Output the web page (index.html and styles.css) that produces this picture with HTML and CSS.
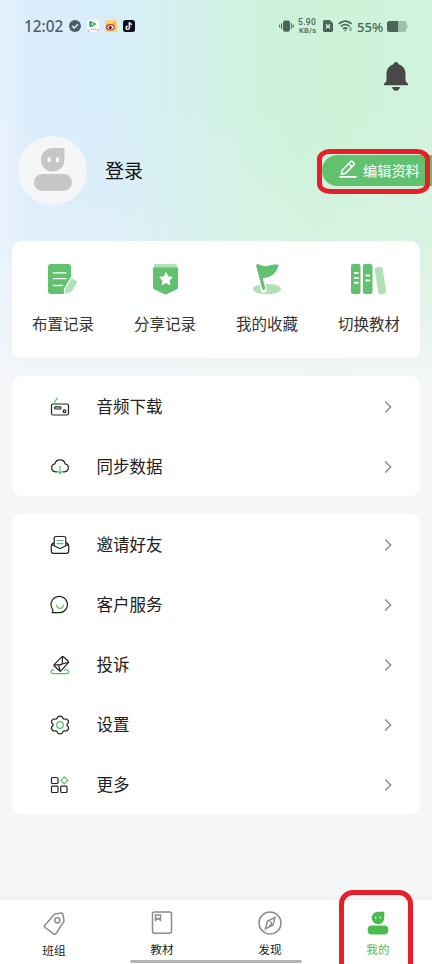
FILE: index.html
```html
<!DOCTYPE html>
<html lang="zh-CN">
<head>
<meta charset="utf-8">
<meta name="viewport" content="width=device-width, initial-scale=1">
<title>我的</title>
<link rel="stylesheet" href="styles.css">
</head>
<body>
<div class="screen">
  <header class="status">
    <span class="time">12:02</span>
    <svg class="app" viewBox="0 0 12 12"><circle cx="6" cy="6" r="6" fill="#4e5f69"/><path d="M3.2 6l2 2 3.7-3.800" fill="none" stroke="#e8f5fb" stroke-width="1.300"/></svg>
    <svg class="app" viewBox="0 0 12 12"><rect width="12" height="12" rx="2.500" fill="#fff"/><path d="M2.200 1.300Q2.500.8 3.300 1l2.900 1.100L5 6.200 3 7.100Q1.700 5 2.200 1.300z" fill="#1695e8"/><path d="M4 1.400L9 3.400Q9.800 4 9 4.600L4.200 7.200Q3.300 7.400 3 6.800z" fill="#41b842"/><path d="M4.700 3l2 1.100-2 1.100z" fill="#fff"/><path d="M1 9.500v1.300l1.500.7M4 9.400h1.500M6.500 9v1M8 9.400h1.500M11 9v1.600l-1 .8" stroke="#777" stroke-width=".7" fill="none"/></svg>
    <svg class="app" viewBox="0 0 12 12"><rect width="12" height="12" rx="2.500" fill="#fdd475"/><ellipse cx="5.400" cy="7.200" rx="4.400" ry="3.200" fill="#d82b27"/><ellipse cx="5.600" cy="7.300" rx="3" ry="2.100" fill="#fff"/><circle cx="5.300" cy="7.400" r="1.500" fill="#222"/><path d="M7.600 2.100q2.800-.2 2.800 2.900M7.900 3.600q1.100 0 1.100 1.200" fill="none" stroke="#f29332" stroke-width=".8"/></svg>
    <svg class="app" viewBox="0 0 12 12"><rect width="12" height="12" rx="2.500" fill="#07101c"/><path d="M6.300 2v5.800a1.600 1.600 0 1 1-1.600-1.600M6.300 2.200q.4 2 2.800 2.200" fill="none" stroke="#fff" stroke-width="1.400"/><path d="M7.300 5v3q-.3 2-2.300 2" fill="none" stroke="#ee3b62" stroke-width=".5"/></svg>
    <svg class="vibrate" viewBox="0 0 16 12"><rect x="4.300" y="0" width="7.400" height="12" rx="2" fill="#4b6558"/><path d="M2.800 3v6.200M.7 4.500v3M13.200 3v6.200M15.300 4.500v3" stroke="#4b6558" stroke-width="1.100"/></svg>
    <span class="speed"><span>5.90</span><span>KB/s</span></span>
    <svg class="sim" viewBox="0 0 10 12"><path d="M1.500 0H6.500L10 3v7.500q0 1.500-1.500 1.500h-7Q0 12 0 10.500v-9Q0 0 1.500 0z" fill="#4b6558"/><path d="M3 4.500l4 3.800M7 4.500L3 8.300" stroke="#e0f5e8" stroke-width="1.400"/></svg>
    <svg class="wifi" viewBox="0 0 15 12"><path d="M.7 3.900q6.500-5.600 13 0M2.800 6.500q4.400-4 8.800 0M5 8.900q2.200-2 4.400 0" fill="none" stroke="#4b6558" stroke-width="1.600"/><path d="M5.800 9.800h2.800l-1.400 1.700zM11.300 8.500l1.300-1.500 1.300 1.500zM11.300 9.600h2.600l-1.300 1.600z" fill="#4b6558"/></svg>
    <span class="percent">55%</span>
    <svg class="battery" viewBox="0 0 21 11"><rect width="19.500" height="11" rx="2.500" fill="#9ebfad"/><path d="M2.500 0H11v11H2.500Q0 11 0 8.500v-6Q0 0 2.500 0z" fill="#4b6558"/><path d="M19.500 3.500q1.500.3 1.500 2t-1.500 2z" fill="#9ebfad"/></svg>
  </header>

  <div class="notice">
    <svg class="bell" viewBox="0 0 24 29"><path d="M12 0q2.200 0 2.500 2.300Q21 4.500 21.500 11v7q0 2 2 3.200.5.300.5 1.300v.8H0v-.8q0-1 .5-1.300 2-1.200 2-3.200v-7Q3 4.500 9.500 2.300 9.800 0 12 0z" fill="#484848"/><path d="M8 25.100h8q-.8 3.500-4 3.700-3.200-.2-4-3.700z" fill="#484848"/></svg>
  </div>

  <section class="profile">
    <div class="avatar"><svg viewBox="0 0 38 43"><path d="M19 0h11.500v12A11.800 11.800 0 1 1 19 0z" fill="#c7c7c7"/><rect x="13.600" y="9.500" width="3" height="4.800" rx="1" fill="#fff"/><rect x="22" y="9.500" width="3" height="4.800" rx="1" fill="#fff"/><rect y="26" width="38" height="17" rx="8.200" fill="#c7c7c7"/></svg></div>
    <h1 class="name">登录</h1>
    <div class="edit">
      <svg viewBox="0 0 18 18"><path d="M3.200 10.300L11.500 1.700q1-.9 2 0l1.300 1.300q.9.900 0 1.900L6.400 13.400l-4.100.9zM9.800 3.700l3 3M1 16.900h16" fill="none" stroke="#fff" stroke-width="1.600" stroke-linejoin="round" stroke-linecap="round"/></svg>
      <span>编辑资料</span>
      <i class="mark mark-edit"></i>
    </div>
  </section>

  <section class="card shortcuts">
    <div class="shortcut"><svg viewBox="0 0 32 32"><rect x="1" y="1" width="23" height="30" rx="3" fill="#62c16f"/><path d="M6.500 9.800h12.500M6.500 15.600h12.500M6.500 22.500h9" stroke="#fff" stroke-width="1.300" stroke-linecap="round"/><path d="M25 14.800l5.500 3q1 .6.400 1.600l-6 9.700-5.500 2.500q-2-.3-1.900-5.500l6.200-10.600q.5-.9 1.300-.7z" fill="#afe0b6" stroke="#fff" stroke-width="1.300"/></svg><span>布置记录</span></div>
    <div class="shortcut"><svg class="shifted" viewBox="0 0 32 32"><path d="M5.500 1h20q1.800 0 1.800 2v3H4V3q0-2 1.500-2z" fill="#afe0b6"/><path d="M3 5.500q0-1 1-1h23q1 0 1 1v19q0 1.200-1 1.800l-10.500 5q-1 .5-2 0L4 26.300q-1-.6-1-1.800z" fill="#62c16f"/><path d="M16 9.700l1.800 4.100 4.500.5-3.300 3 .9 4.400-3.900-2.200-3.900 2.200.9-4.400-3.300-3 4.500-.5z" fill="#fff" stroke="#fff" stroke-linejoin="round"/></svg><span>分享记录</span></div>
    <div class="shortcut"><svg class="shifted" viewBox="0 0 32 32"><ellipse cx="15" cy="26" rx="14" ry="5.300" fill="#afe0b6"/><path d="M6.500 4l5.200 23" stroke="#fff" stroke-width="5.800" stroke-linecap="round"/><path d="M4.200 3q-.4-1.900 2-1.900 5.500 3.300 11 1.400 4-1.500 8.500-1 1.400.2.800 1.800Q23 14.500 10.800 15.200l2.300 9.900q.2 1.500-1.200 1.800-1.300.2-1.700-1.200z" fill="#62c16f"/></svg><span>我的收藏</span></div>
    <div class="shortcut"><svg class="books" viewBox="0 0 36 32"><rect x="0" y="1" width="9.500" height="30" rx="2" fill="#62c16f"/><rect x="12" y="1" width="9.500" height="30" rx="2" fill="#62c16f"/><path d="M3.800 10h3M3.800 14.900h3M3.800 19.800h3M15.200 12.500h3M15.200 17.500h3" stroke="#fff" stroke-width="2" stroke-linecap="round"/><rect x="25.500" y="4" width="8" height="27" rx="2" transform="rotate(-9 29.500 17.500)" fill="#afe0b6"/></svg><span>切换教材</span></div>
  </section>

  <section class="card list">
    <div class="row"><svg class="ico" viewBox="0 0 20 20"><rect x="1.500" y="7" width="17" height="11" rx="1.500"/><rect x="4.500" y="9.800" width="6.500" height="2.200" rx="1"/><circle cx="14.500" cy="14.300" r="1.400"/><path class="g" d="M4.300 5.500L7.200 1.200"/></svg><span>音频下载</span><svg class="chev" viewBox="0 0 8 14"><path d="M1.200 1.500L6.700 7l-5.500 5.500"/></svg></div>
    <div class="row"><svg class="ico" viewBox="0 0 20 20"><path d="M7 14.800H5.500A4 4 0 0 1 4.800 6.900a5.400 5.400 0 0 1 10.400 0A4 4 0 0 1 14.500 14.800H13"/><path class="g" d="M10 9v7.500M8 14.300l2 2.300 2-2.300"/></svg><span>同步数据</span><svg class="chev" viewBox="0 0 8 14"><path d="M1.200 1.500L6.700 7l-5.500 5.500"/></svg></div>
  </section>

  <section class="card list">
    <div class="row"><svg class="ico" viewBox="0 0 20 20"><path d="M4 7.500L2 9q-.7.600-.7 1.500V16q0 2.300 2.200 2.300h13q2.200 0 2.200-2.300v-5.500q0-.9-.7-1.500l-2-1.500M1.500 9.500L8.700 13q1.300.6 2.600 0l7.200-3.500M4.200 10.200V3.300q0-1.800 1.800-1.800h8q1.800 0 1.800 1.800v6.900"/><path class="g" d="M7 5.500h6M7 8.700h6"/></svg><span>邀请好友</span><svg class="chev" viewBox="0 0 8 14"><path d="M1.200 1.500L6.700 7l-5.500 5.500"/></svg></div>
    <div class="row"><svg class="ico" viewBox="0 0 20 20"><path d="M10 17.700H2.200Q3.200 16.300 2.700 14.500A8.200 8.200 0 1 1 10 17.700z"/><path class="g" d="M6.500 10.300q.8 3 3.500 3t3.500-3"/></svg><span>客户服务</span><svg class="chev" viewBox="0 0 8 14"><path d="M1.200 1.500L6.700 7l-5.500 5.500"/></svg></div>
    <div class="row"><svg class="ico" viewBox="0 0 20 20"><path d="M12 1.700q.7-.6 1.400 0l5 4.600q.6.600 0 1.300L11 15.800q-.7.700-1.400 0L4.200 11q-.6-.7 0-1.300zM12.600 1.500l-.5 7.300q-.1 1-1 .7L4 10.200M11.800 9l6.800-1.700M8.700 10.300l1.400 5.700"/><path class="g" d="M4 14.800H3q-1.800 0-1.800 1.900T3 18.600h14q1.800 0 1.800-1.900T17 14.800h-2.500"/></svg><span>投诉</span><svg class="chev" viewBox="0 0 8 14"><path d="M1.200 1.500L6.700 7l-5.500 5.500"/></svg></div>
    <div class="row"><svg class="ico" viewBox="0 0 20 20"><path d="M7 3.500C7.600.3 12.400.3 13 3.500c.3.600.8.900 1.500.7 3-1.300 5.400 2.700 2.900 4.800-.6.600-.6 1.400 0 2 2.500 2.100.1 6.100-2.900 4.800-.7-.2-1.200.1-1.500.7-.6 3.200-5.400 3.200-6 0-.3-.6-.8-.9-1.500-.7-3 1.300-5.400-2.700-2.900-4.800.6-.6.600-1.400 0-2C.1 6.900 2.500 2.900 5.500 4.200c.7.200 1.200-.1 1.500-.7z"/><circle class="g" cx="10" cy="10" r="3.300"/></svg><span>设置</span><svg class="chev" viewBox="0 0 8 14"><path d="M1.200 1.500L6.700 7l-5.500 5.500"/></svg></div>
    <div class="row"><svg class="ico" viewBox="0 0 20 20"><rect x="1.500" y="2.500" width="6.500" height="6" rx="1"/><rect x="1.500" y="11.200" width="6.500" height="6.300" rx="1"/><rect x="10.700" y="11.200" width="6.300" height="6.300" rx="1"/><path class="g" d="M14.300 1.800l3.500 3.500-3.500 3.500-3.500-3.500z"/></svg><span>更多</span><svg class="chev" viewBox="0 0 8 14"><path d="M1.200 1.500L6.700 7l-5.500 5.500"/></svg></div>
  </section>

  <nav class="tabs">
    <div class="tab"><svg viewBox="0 0 24 24"><g transform="translate(0 1)"><path d="M12 2.700q.4-.6 1.200-.8l6-.8q1.500-.1 1.800 1.300l.9 6q.1.800-.3 1.500L14 21.500q-1.100 1.400-2.500.3l-8.300-6.300q-1.300-1-.3-2.300z"/><circle cx="15.300" cy="8.300" r="2.600"/></g></svg><span>班组</span></div>
    <div class="tab"><svg viewBox="0 0 24 24"><rect x="2.500" y="1" width="19" height="21.300" rx="2"/><path d="M5.500 4h5v5.200L8 7.300 5.500 9.200z"/></svg><span>教材</span></div>
    <div class="tab"><svg viewBox="0 0 24 24"><circle cx="12" cy="12" r="11"/><path d="M17 6.500l-2 7.500-7.500 3.800 2-7.800z"/><path d="M11 14.500q3 .2 2.500-2.400-.5-1.600-2-1"/></svg><span>发现</span></div>
    <div class="tab active"><svg viewBox="0 0 24 24"><path d="M12 .7h5.800q.5 0 .5.500v5.700A6.300 6.300 0 1 1 12 .7z"/><rect x="1.700" y="14.600" width="20.600" height="9" rx="4"/><path d="M9.700 5.800v1.800M14.200 5.800v1.800" stroke="#fff" stroke-width="1.400"/></svg><span>我的</span><i class="mark mark-tab"></i></div>
    <i class="home"></i>
  </nav>
</div>
</body>
</html>
```
FILE: styles.css
```css
* { box-sizing: border-box; }
body {
  margin: 0;
  font-family: "Noto Sans", "Noto Sans CJK SC", sans-serif;
  color: #202020;
}
svg { display: block; flex: none; }
.screen {
  width: 432px;
  height: 964px;
  overflow: hidden;
  display: flex;
  flex-direction: column;
  background:
    linear-gradient(180deg, rgba(245,246,248,0) 100px, rgba(245,246,248,.22) 240px, rgba(245,246,248,.5) 305px, #f5f6f8 385px),
    linear-gradient(90deg, #e9f2fc 0, #daedfc 30px, #d8edfa 110px, #d4f0ee 180px, #d1f2e3 235px, #ccf2da 300px, #ccf3d8 340px, #d2f3dd 432px);
}
.status {
  height: 52px;
  padding: 0 24px;
  display: flex;
  align-items: center;
  color: #4b6558;
}
.time { width: 45px; font-size: 15.300px; font-weight: 500; color: #4e5f69; }
.app { width: 12px; height: 12px; margin-right: 6px; }
.vibrate { width: 15px; height: 12px; margin: 0 4px 0 138px; }
.speed {
  width: 25px;
  display: flex;
  flex-direction: column;
  gap: 1px;
  font-family: Roboto, sans-serif;
  font-size: 7.500px;
  font-weight: 500;
  line-height: 7px;
  letter-spacing: .3px;
}
.speed span { height: 7px; }
.speed span:first-child { font-size: 8.500px; }
.speed span:last-child { padding-left: 1px; }
.sim { width: 10px; height: 12px; margin-right: 5px; }
.wifi { width: 15px; height: 12px; }
.percent { width: 30px; margin-left: 4px; padding-top: 1px; font-size: 13.200px; font-weight: 500; }
.battery { width: 21px; height: 11px; }
.notice { height: 84px; padding: 10px 24px 0; display: flex; justify-content: flex-end; }
.bell { width: 24px; height: 29px; }
.profile { height: 69px; padding-left: 18px; display: flex; align-items: center; }
.avatar {
  width: 69px;
  height: 69px;
  border-radius: 50%;
  background: #f5f6f8;
  display: flex;
  align-items: center;
  justify-content: center;
}
.avatar svg { width: 38px; height: 43px; margin-top: -3px; }
.name { margin: 0 auto 0 18px; font-size: 19px; line-height: 28px; font-weight: 400; color: #111; }
.edit {
  position: relative;
  width: 110px;
  height: 31px;
  padding-left: 17px;
  display: flex;
  align-items: center;
  gap: 6px;
  border-radius: 16px 0 0 16px;
  background: #62c16f;
  color: #fff;
  font-size: 14.200px;
  line-height: 20px;
}
.edit svg { width: 18px; height: 18px; margin-top: -3px; }
.mark { position: absolute; border: 5px solid #e71f28; }
.mark-edit { left: -5px; top: -6px; width: 113px; height: 45px; border-radius: 13px / 10px; }
.card { margin: 0 12px 18px; border-radius: 10px; background: #fff; }
.shortcuts { height: 117.500px; margin-top: 35.500px; display: grid; grid-template-columns: repeat(4, 1fr); }
.shortcut {
  padding-top: 22px;
  display: flex;
  flex-direction: column;
  align-items: center;
  gap: 17.500px;
  font-size: 15.500px;
  line-height: 24px;
  color: #333;
}
.shortcut svg { width: 32px; height: 32px; }
.shortcut .shifted { margin-left: 2px; }
.shortcut .books { width: 36px; }
.row {
  height: 60px;
  padding: 1px 28px 0 38px;
  display: flex;
  align-items: center;
  font-size: 16.500px;
  line-height: 24px;
}
.row span { margin: 0 auto 0 26.500px; }
.ico { width: 20px; height: 20px; fill: none; stroke: #222; stroke-width: 1.200; stroke-linejoin: round; stroke-linecap: round; }
.ico .g { stroke: #58bb68; }
.chev { width: 8px; height: 14px; fill: none; stroke: #858585; stroke-width: 1.300; }
.tabs {
  position: relative;
  height: 64px;
  margin-top: auto;
  display: grid;
  grid-template-columns: repeat(4, 1fr);
  background: #fff;
  box-shadow: 0 -1px 4px rgba(0,0,0,.04);
}
.tab {
  position: relative;
  padding-top: 11px;
  display: flex;
  flex-direction: column;
  align-items: center;
  font-size: 11.700px;
  line-height: 18px;
  color: #222;
}
.tab svg { width: 24px; height: 24px; margin-bottom: 5px; fill: none; stroke: #8c8c8c; stroke-width: 1.500; }
.tab:first-child svg { margin-bottom: 6px; }
.tab.active { color: #4fbb50; }
.tab.active svg { fill: #4bbb4d; stroke: none; }
.mark-tab { left: 15px; top: -10px; width: 74px; height: 90px; border-radius: 14px; }
.home { position: absolute; left: 130px; bottom: 1px; width: 172px; height: 3px; border-radius: 2px; background: #b5b5b5; }
```
